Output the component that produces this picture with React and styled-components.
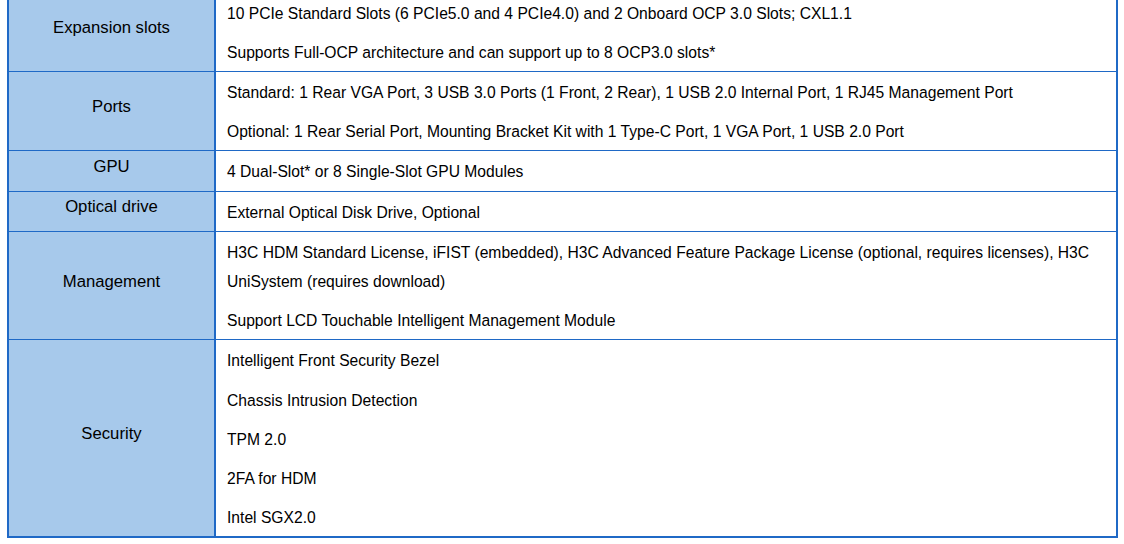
import React from "react";
import styled, { createGlobalStyle } from "styled-components";

const GlobalStyle = createGlobalStyle`
    html, body {
        margin: 0;
        padding: 0;
        background: #ffffff;
        overflow: hidden;
    }
    body {
        font-family: "Liberation Sans", Arial, sans-serif;
        color: #000000;
    }
`;

const specs = [
    {
        label: "Expansion slots",
        lines: [
            "10 PCIe Standard Slots (6 PCIe5.0 and 4 PCIe4.0) and 2 Onboard OCP 3.0 Slots; CXL1.1",
            "Supports Full-OCP architecture and can support up to 8 OCP3.0 slots*",
        ],
    },
    {
        label: "Ports",
        lines: [
            "Standard: 1 Rear VGA Port, 3 USB 3.0 Ports (1 Front, 2 Rear), 1 USB 2.0 Internal Port, 1 RJ45 Management Port",
            "Optional: 1 Rear Serial Port, Mounting Bracket Kit with 1 Type-C Port, 1 VGA Port, 1 USB 2.0 Port",
        ],
    },
    {
        label: "GPU",
        lines: ["4 Dual-Slot* or 8 Single-Slot GPU Modules"],
    },
    {
        label: "Optical drive",
        lines: ["External Optical Disk Drive, Optional"],
    },
    {
        label: "Management",
        lines: [
            "H3C HDM Standard License, iFIST (embedded), H3C Advanced Feature Package License (optional, requires licenses), H3C UniSystem (requires download)",
            "Support LCD Touchable Intelligent Management Module",
        ],
    },
    {
        label: "Security",
        lines: [
            "Intelligent Front Security Bezel",
            "Chassis Intrusion Detection",
            "TPM 2.0",
            "2FA for HDM",
            "Intel SGX2.0",
        ],
    },
];

function App() {
    return (
        <>
            <GlobalStyle />
            <Page>
                <SpecTable>
                    {specs.map((row, i) => (
                        <Row key={row.label} $last={i === specs.length - 1}>
                            <Label>
                                <span>{row.label}</span>
                            </Label>
                            <Detail>
                                {row.lines.map((line) => (
                                    <Line key={line}>{line}</Line>
                                ))}
                            </Detail>
                        </Row>
                    ))}
                </SpecTable>
            </Page>
        </>
    );
}

const Page = styled.div`
    padding-left: 7px;
    width: 1111px;
`;

const SpecTable = styled.div`
    margin-top: -7.4px;
    border-left: 2px solid #1f69c6;
    border-right: 2px solid #1f69c6;
    border-bottom: 2px solid #1f69c6;
`;

const Row = styled.div`
    display: grid;
    grid-template-columns: 207px 1fr;
    border-bottom: ${(p) => (p.$last ? "none" : "1px solid #1f69c6")};
`;

const Label = styled.div`
    display: flex;
    align-items: center;
    justify-content: center;
    background: #a7c9eb;
    border-right: 2px solid #1f69c6;
    padding-bottom: 9px;
    font-size: 16.7px;
    line-height: 29px;
`;

const Detail = styled.div`
    display: flex;
    flex-direction: column;
    gap: 10px;
    padding: 6px 20px 4px 11px;
`;

const Line = styled.p`
    margin: 0;
    font-size: 15.65px;
    line-height: 29.2px;
`;

export default App;
